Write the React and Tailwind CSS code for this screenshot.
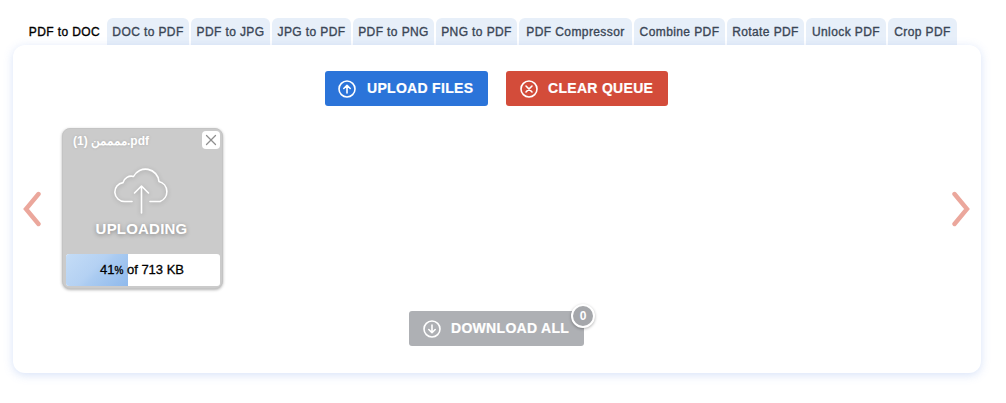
import { X } from "lucide-react";

const tabs = [
  ["PDF to DOC", "w-[81px]"],
  ["DOC to PDF", "w-[82px]"],
  ["PDF to JPG", "w-[79px]"],
  ["JPG to PDF", "w-[79px]"],
  ["PDF to PNG", "w-[81px]"],
  ["PNG to PDF", "w-[81px]"],
  ["PDF Compressor", "w-[113px]"],
  ["Combine PDF", "w-[91px]"],
  ["Rotate PDF", "w-[77px]"],
  ["Unlock PDF", "w-[80px]"],
  ["Crop PDF", "w-[69px]"],
];

function CircleIcon({ type }) {
  return (
    <svg width="18" height="18" viewBox="0 0 18 18" fill="none" stroke="white" strokeWidth="1.6" strokeLinecap="round" strokeLinejoin="round">
      <circle cx="9" cy="9" r="8" />
      {type === "up" && <path d="M9 13V5.5M5.8 8.5 9 5.3l3.2 3.2" />}
      {type === "down" && <path d="M9 5v7.5M5.8 9.5 9 12.7l3.2-3.2" />}
      {type === "x" && <path d="M6 6l6 6M12 6l-6 6" />}
    </svg>
  );
}

function ActionButton({ type, label, className }) {
  return (
    <button className={`flex items-center h-[35px] rounded-[3px] text-white font-bold text-[14px] tracking-[0.3px] [-webkit-text-stroke:0.2px_white] ${className}`}>
      <CircleIcon type={type} />
      <span>{label}</span>
    </button>
  );
}

function Chevron({ points, className }) {
  return (
    <svg width="20" height="36" viewBox="0 0 20 36" fill="none" stroke="#eba79c" strokeWidth="4.4" strokeLinecap="round" strokeLinejoin="miter" className={`absolute top-[146px] ${className}`}>
      <path d={points} />
    </svg>
  );
}

function FileCard() {
  return (
    <div className="relative w-[161px] h-[161px] rounded-[8px] bg-[#cbcbcb] border border-[#c4c4c4] shadow-[0_1px_3px_rgba(0,0,0,0.3)]">
      <p className="pl-[10px] pt-[5px] text-[12px] leading-[15px] font-bold text-white [text-shadow:0_0_3px_rgba(0,0,0,0.15)]">ممممن (1).pdf</p>
      <button className="absolute top-[2px] right-[2px] w-[18px] h-[18px] rounded-[4px] bg-white flex items-center justify-center">
        <X size={18} strokeWidth={1.7} className="text-[#8f8f8f]" />
      </button>
      <div className="flex flex-col items-center mt-[19px] pr-[2px]">
        <svg width="58" height="46" viewBox="0 0 58 46" fill="none" stroke="white" strokeWidth="1.6" strokeLinecap="round" strokeLinejoin="round" className="drop-shadow-[0_1px_2px_rgba(0,0,0,0.2)]">
          <path d="M19 33.5H11.5A9.5 9.5 0 0 1 10 14.6A8.5 8.5 0 0 1 20.5 8.5A13.5 13.5 0 0 1 46 13.5A10.5 10.5 0 0 1 47 33.5H37" />
          <path d="M28.5 45V18M21.5 25 28.5 18 35.5 25" />
        </svg>
        <span className="mt-[6px] font-bold text-[15px] tracking-[0.2px] leading-[18px] text-white [text-shadow:0_1px_4px_rgba(0,0,0,0.35)]">UPLOADING</span>
      </div>
      <div className="absolute left-[3px] right-[2px] bottom-[2px] h-[32px] rounded-[3px] bg-white overflow-hidden flex items-center justify-center pr-[2px]">
        <div className="absolute inset-y-0 left-0 w-[62px] bg-[linear-gradient(135deg,#c4dcf6_0%,#b4d1f3_45%,#aacbf1_55%,#8fb9ec_100%)]" />
        <span className="relative text-[13px] text-black [-webkit-text-stroke:0.3px_black]">
          41<span className="text-[10px]">%</span> of 713 KB
        </span>
      </div>
    </div>
  );
}

export default function App() {
  return (
    <div className="w-[1006px] h-[403px] bg-white font-['Liberation_Sans',Arial,sans-serif] pt-[18px] pl-[13px]">
      <div className="flex gap-[2px] pl-[11px] items-end h-[27px]">
        {tabs.map(([label, width], i) => (
          <div
            key={label}
            className={`${width} h-[27px] flex items-center justify-center rounded-t-[6px] text-[12px] tracking-[0.4px] [-webkit-text-stroke:0.35px_currentColor] ${i === 0 ? "bg-white text-black" : "bg-[#e7eff9] text-[#3a4656]"}`}
          >
            {label}
          </div>
        ))}
      </div>
      <div className="relative w-[968px] h-[328px] rounded-[12px] bg-white shadow-[0_2px_10px_rgba(110,150,230,0.28)]">
        <div className="flex justify-center gap-[18px] pt-[26px] pr-[1px]">
          <ActionButton type="up" label="UPLOAD FILES" className="w-[163px] pl-[13px] gap-[11px] bg-[#2b74d9]" />
          <ActionButton type="x" label="CLEAR QUEUE" className="w-[162px] pl-[14px] gap-[10px] bg-[#d34c3a]" />
        </div>
        <div className="pl-[49px] pt-[22px]">
          <FileCard />
        </div>
        <div className="flex justify-center pt-[22px] pr-[1px]">
          <div className="relative">
            <ActionButton type="down" label="DOWNLOAD ALL" className="w-[175px] pl-[14px] gap-[10px] bg-[#aeb0b4]" />
            <span className="absolute -top-[7px] -right-[11px] w-[24px] h-[24px] rounded-full bg-[#a5a7ab] border-2 border-white shadow-[0_1px_3px_rgba(0,0,0,0.3)] flex items-center justify-center text-white text-[12px] font-bold">0</span>
          </div>
        </div>
        <Chevron points="M16.5 3 4 18 16.5 33" className="left-[9px]" />
        <Chevron points="M3.5 3 16 18 3.5 33" className="right-[10px]" />
      </div>
    </div>
  );
}
